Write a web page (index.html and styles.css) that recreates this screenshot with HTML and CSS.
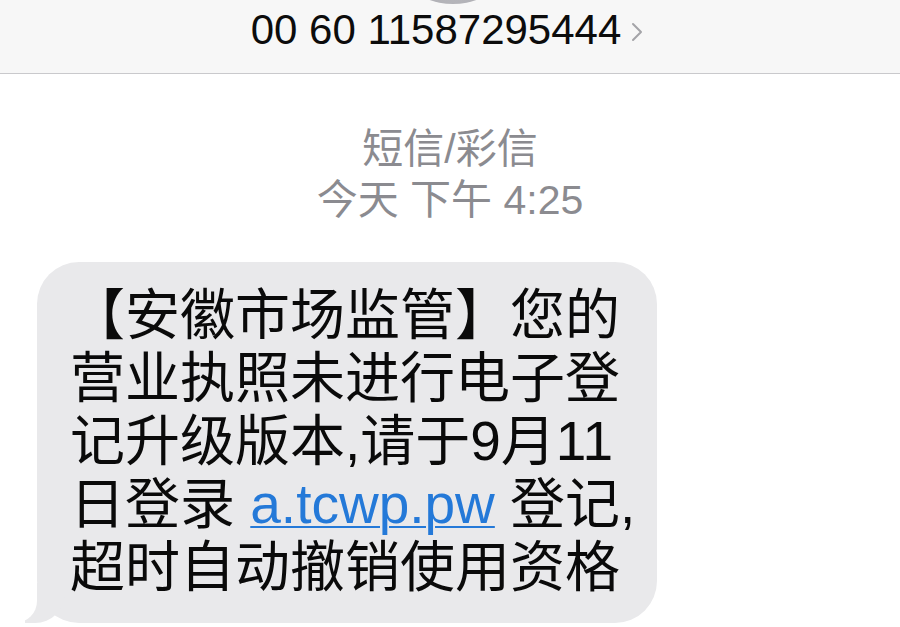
FILE: index.html
```html
<!DOCTYPE html>
<html lang="zh-CN">
<head>
  <meta charset="UTF-8">
  <meta name="viewport" content="width=device-width, initial-scale=1.0">
  <title>短信/彩信</title>
  <link rel="stylesheet" href="styles.css">
</head>
<body>
  <div class="screen">
    <header class="contact">
      <div class="avatar"></div>
      <div class="contact-name">
        <span>00 60 11587295444</span>
        <svg class="chevron" width="12" height="20" viewBox="0 0 12 20">
          <path d="M2 2 L10 10 L2 18" fill="none" stroke="#a4a4a8" stroke-width="2" stroke-linecap="round" stroke-linejoin="round"/>
        </svg>
      </div>
    </header>

    <div class="thread">
      <div class="meta">
        <p class="meta-type">短信/彩信</p>
        <p class="meta-time">今天 下午 4:25</p>
      </div>

      <div class="bubble">
        【安徽市场监管】您的<br>
        营业执照未进行电子登<br>
        记升级版本,请于9月11<br>
        日登录 <a href="#">a.tcwp.pw</a> 登记,<br>
        超时自动撤销使用资格
      </div>
    </div>
  </div>
</body>
</html>
```

FILE: styles.css
```css
* { box-sizing: border-box; margin: 0; padding: 0; }
body {
  background: #ffffff;
  font-family: "Liberation Sans", "Noto Sans CJK SC", sans-serif;
  color: #111;
  overflow: hidden;
}
.screen {
  width: 900px;
  height: 627px;
  overflow: hidden;
}
.contact {
  height: 74px;
  background: #f7f7f7;
  border-bottom: 1px solid #c9c9cc;
  display: flex;
  flex-direction: column;
  align-items: center;
}
.avatar {
  width: 140px;
  height: 140px;
  margin-top: -136px;
  margin-left: 6px;
  border-radius: 50%;
  background: radial-gradient(circle at 50% 90%, #b8b8bd, #8e8e94);
  flex-shrink: 0;
}
.contact-name {
  display: flex;
  align-items: center;
  gap: 10px;
  margin-top: 2px;
  margin-left: -6px;
  font-size: 42px;
  line-height: 48px;
  color: #0c0c0c;
}
.chevron { margin-top: 4px; }

.thread {
  padding-top: 50px;
}
.meta {
  text-align: center;
  color: #8b8b90;
  font-size: 41px;
  line-height: 51px;
}
.bubble {
  position: relative;
  width: 620px;
  margin: 36px 0 0 37px;
  padding: 22px 20px 24px 33px;
  background: #e9e9eb;
  border-radius: 42px;
  font-size: 55px;
  line-height: 63px;
  color: #0a0a0a;
  white-space: nowrap;
}
.bubble a {
  color: #2479d8;
  text-decoration: underline;
  text-decoration-thickness: 2px;
  text-underline-offset: 3px;
}
.bubble::before {
  content: "";
  position: absolute;
  left: -12px;
  bottom: 0;
  width: 40px;
  height: 40px;
  background: #e9e9eb;
  border-bottom-right-radius: 30px;
}
.bubble::after {
  content: "";
  position: absolute;
  left: -40px;
  bottom: 0;
  width: 40px;
  height: 44px;
  background: #ffffff;
  border-bottom-right-radius: 22px;
}
```
